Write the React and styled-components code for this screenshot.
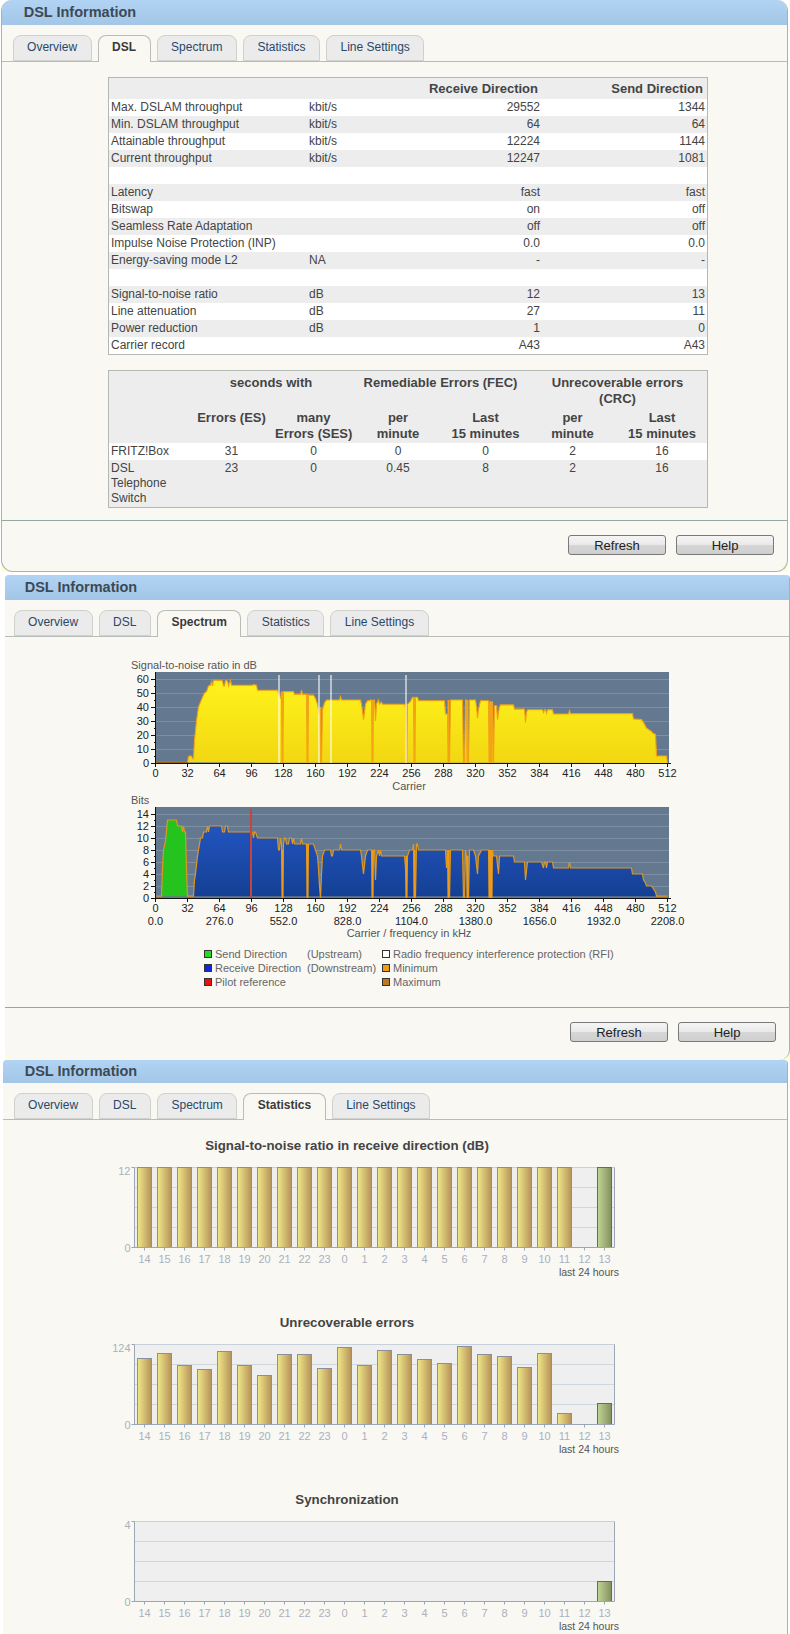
import styled, { createGlobalStyle } from "styled-components";

const TABS = ["Overview", "DSL", "Spectrum", "Statistics", "Line Settings"];
const HOURS = [14, 15, 16, 17, 18, 19, 20, 21, 22, 23, 0, 1, 2, 3, 4, 5, 6, 7, 8, 9, 10, 11, 12, 13];

const THROUGHPUT = [
  ["Max. DSLAM throughput", "kbit/s", "29552", "1344"],
  ["Min. DSLAM throughput", "kbit/s", "64", "64"],
  ["Attainable throughput", "kbit/s", "12224", "1144"],
  ["Current throughput", "kbit/s", "12247", "1081"],
  ["", "", "", ""],
  ["Latency", "", "fast", "fast"],
  ["Bitswap", "", "on", "off"],
  ["Seamless Rate Adaptation", "", "off", "off"],
  ["Impulse Noise Protection (INP)", "", "0.0", "0.0"],
  ["Energy-saving mode L2", "NA", "-", "-"],
  ["", "", "", ""],
  ["Signal-to-noise ratio", "dB", "12", "13"],
  ["Line attenuation", "dB", "27", "11"],
  ["Power reduction", "dB", "1", "0"],
  ["Carrier record", "", "A43", "A43"],
];

const SNR = [
  [0, 0.5], [31, 0.5], [32, 4.5], [33, 5], [35, 5], [36, 3], [37, 3], [38, 16], [40, 30], [42, 40], [44, 43.5],
  [46, 47], [48, 50], [50, 51], [52, 55], [54, 55.5], [55, 58], [56, 55], [57, 59], [65, 59], [66, 58.5], [67, 55],
  [68, 55], [69, 59], [71, 58.5], [72, 55], [74, 59], [75, 55.5], [96, 55.5], [97, 56], [100, 55.5], [101, 52],
  [121, 52], [122, 50], [124, 46], [125, 51], [126, 0], [127, 51], [137, 51], [138, 49], [144, 49], [145, 52],
  [146, 49], [150, 49], [151, 0], [152, 48.5], [157, 48.5], [159, 46], [161, 42], [163, 34], [164, 0], [165, 0],
  [166, 38], [168, 43], [170, 45], [183, 45], [184, 47.5], [185, 45], [204, 45], [205, 42], [206, 37], [207, 31],
  [208, 36], [209, 42], [211, 44.5], [215, 45], [216, 0], [217, 45], [218, 45], [219, 30], [220, 42], [222, 45],
  [223, 42], [225, 43.5], [226, 42], [248, 42], [249, 40], [250, 0], [251, 42], [254, 44], [256, 47], [257, 47],
  [258, 0], [259, 47], [261, 47], [262, 44.5], [288, 44.5], [289, 35], [291, 35], [292, 0], [293, 0], [294, 45],
  [306, 45], [307, 0], [308, 0], [309, 45], [310, 45], [311, 0], [312, 0], [313, 45], [319, 45], [320, 40],
  [321, 32], [322, 38], [324, 44.5], [332, 44.5], [333, 0], [334, 44], [335, 0], [336, 44], [337, 0], [338, 41],
  [340, 41], [341, 31], [342, 36], [343, 40], [344, 41.5], [357, 41.5], [358, 38.5], [368, 38.5], [369, 29],
  [370, 36], [371, 38], [386, 38], [387, 36], [388, 38], [389, 38], [390, 35.5], [391, 38], [396, 38], [397, 35],
  [412, 35], [413, 37.5], [414, 35.3], [476, 35.3], [477, 31.5], [485, 31], [487, 29], [490, 25], [492, 24],
  [494, 23], [497, 21], [499, 20.5], [500, 5], [510, 5], [511, 0],
];

const BITS_UP = [
  [0, 0.3], [5, 0.3], [6, 5], [7, 8], [9, 9.5], [11, 13], [20, 13], [21, 12], [25, 12], [26, 11], [27, 12], [28, 11],
  [29, 11], [30, 5], [31, 0.3],
];

const BITS_DOWN = [
  [31, 0.3], [37, 0.3], [38, 3], [39, 4], [41, 7], [43, 9], [44, 10], [46, 10], [47, 11], [50, 11], [51, 12], [52, 11],
  [53, 12], [65, 12], [66, 11], [68, 11], [69, 12], [71, 12], [72, 11], [96, 11], [97, 10], [98, 11], [99, 11],
  [101, 10], [121, 10], [122, 8], [123, 8], [124, 10], [125, 9], [126, 0], [127, 9], [128, 10], [129, 10], [130, 9],
  [132, 9], [133, 10], [135, 10], [136, 9], [137, 10], [138, 9], [144, 9], [145, 10], [146, 9], [150, 9], [151, 0],
  [152, 9], [157, 9], [159, 8], [161, 7], [162, 5], [163, 2], [164, 0], [165, 4], [166, 7], [168, 8], [174, 8],
  [175, 7], [176, 7], [177, 8], [183, 8], [184, 9], [185, 8], [204, 8], [205, 7], [207, 4], [209, 7], [211, 8],
  [215, 8], [216, 0], [217, 8], [218, 8], [219, 3], [220, 7], [222, 8], [223, 7], [224, 8], [225, 7], [248, 7],
  [249, 5], [250, 0], [251, 7], [253, 8], [256, 8], [257, 9], [258, 0], [259, 0], [260, 9], [261, 9], [262, 8],
  [289, 8], [290, 5], [291, 8], [292, 0], [293, 0], [294, 8], [306, 8], [307, 0], [308, 0], [309, 8], [310, 7],
  [311, 0], [312, 0], [313, 8], [317, 8], [319, 7], [321, 4], [322, 7], [325, 8], [332, 8], [333, 0], [334, 8],
  [335, 0], [336, 8], [337, 7], [340, 7], [342, 4], [343, 7], [357, 7], [358, 6], [368, 6], [369, 3], [371, 6],
  [385, 6], [387, 5], [388, 6], [389, 6], [390, 5], [391, 6], [396, 6], [397, 5], [412, 5], [413, 6], [414, 5],
  [475, 5], [476, 4], [486, 4], [487, 3], [489, 2.5], [490, 2], [495, 2], [499, 1], [500, 0.3], [511, 0.3],
];

const RFI_BARS = [123, 163, 175, 250];

// carrier, width, height of the solid minimum bars that run down to the axis
const SNR_DIPS = [[126, 2, 51], [151, 2, 49], [164, 2, 40], [216, 2, 45], [250, 2, 42], [258, 2, 47], [292, 2, 45], [311, 2, 45], [333, 4, 44]];
const BITS_DIPS = [[126, 2, 8], [151, 2, 9], [216, 2, 8], [250, 2, 7], [258, 2, 8], [292, 2, 8], [311, 2, 7], [333, 4, 8]];

const CRC_BARS = [66, 71, 59, 55, 73, 59, 49, 70, 70, 56, 77, 59, 74, 70, 65, 61, 78, 70, 68, 57, 71, 11, 0, 21];
const SNR_BARS = HOURS.map((h) => (h === 12 ? 0 : 80));
const SYNC_BARS = HOURS.map((h) => (h === 13 ? 20 : 0));

const GlobalStyle = createGlobalStyle`
  html, body {
    margin: 0;
    padding: 0;
    background: #ffffff;
  }
  body {
    font-family: "Liberation Sans", Arial, sans-serif;
    font-size: 12px;
    color: #444444;
  }
`;

const Page = styled.div`
  height: 1634px;
  overflow: hidden;
`;

const PanelFrame = styled.section`
  background: linear-gradient(transparent calc(100% - 12px), #ffffcf calc(100% - 12px));
  margin: ${(p) => `0 ${p.$right}px ${p.$gap}px ${p.$left}px`};
`;

const PanelBody = styled.div`
  background: #f9f8f3;
  border-left: ${(p) => (p.$edge ? "1px solid #a6b5a2" : "none")};
  border-right: 1px solid #a6b5a2;
  border-bottom: ${(p) => (p.$closed ? "1px solid #a6b5a2" : "none")};
  border-radius: ${(p) => (p.$rounded ? "11px 11px 12px 12px" : "4px 4px 10px 10px")};
  overflow: hidden;
`;

const PanelHeader = styled.h1`
  margin: 0;
  height: ${(p) => p.$height}px;
  line-height: ${(p) => p.$height}px;
  padding-left: ${(p) => 24.7 - p.$inset}px;
  background: linear-gradient(#b1d4f5, #a3c6e7);
  color: #3d4a54;
  font-size: 14.5px;
  font-weight: bold;
`;

const TabStrip = styled.nav`
  display: flex;
  gap: 6px;
  height: 27px;
  box-sizing: border-box;
  margin-top: 10px;
  padding-left: ${(p) => 13.6 - p.$inset}px;
  border-bottom: 1px solid #b8bdb8;
`;

const Tab = styled.span`
  height: ${(p) => (p.$active ? 27 : 26)}px;
  box-sizing: border-box;
  padding: 0 13.5px;
  line-height: 22px;
  background: ${(p) => (p.$active ? "#f9f8f3" : "#ebebeb")};
  border: 1px solid ${(p) => (p.$active ? "#b8bdb8" : "#d0d1cc")};
  border-bottom: ${(p) => (p.$active ? "none" : "1px solid #d0d1cc")};
  border-radius: 8px 8px 0 0;
  color: ${(p) => (p.$active ? "#3a3a3a" : "#28486a")};
  font-weight: ${(p) => (p.$active ? "bold" : "normal")};
`;

const TableArea = styled.div`
  padding: 15px 0 12px 106px;
  display: flex;
  flex-direction: column;
  gap: 15px;
`;

const DataTable = styled.table`
  width: 600px;
  box-sizing: border-box;
  table-layout: fixed;
  border-collapse: separate;
  border-spacing: 0;
  border: 1px solid #b4b8b2;
  background: #ededed;
  line-height: 15px;
`;

const Row = styled.tr`
  background: ${(p) => (p.$shade ? "#ededed" : "#ffffff")};
`;

const HeadCell = styled.th`
  padding: ${(p) => p.$pad || "3px 4px 2px 2px"};
  font-size: 13px;
  line-height: 16px;
  font-weight: bold;
  white-space: nowrap;
  color: #444444;
  text-align: ${(p) => p.$align || "center"};
  vertical-align: top;
`;

const Cell = styled.td`
  height: 17px;
  box-sizing: border-box;
  padding: 1px 2px;
  text-align: ${(p) => p.$align || "left"};
  vertical-align: top;
`;

const PanelFooter = styled.footer`
  display: flex;
  justify-content: flex-end;
  gap: 10px;
  padding: 14px 13px ${(p) => p.$bottom}px 0;
  border-top: 1px solid #94aaa4;
`;

const ActionButton = styled.button`
  width: 98px;
  height: 20px;
  padding: 0;
  border: 1px solid #777a78;
  border-radius: 3px;
  background: linear-gradient(#f5f5f5, #e9e9e9 50%, #d6d6d6 50%, #cfcfcf);
  color: #222222;
  font-family: inherit;
  font-size: 13px;
  line-height: 17px;
`;

const SpectrumSvg = styled.svg`
  display: block;
  width: 785px;
  height: 303px;
`;

const AxisText = styled.text`
  font-size: 11px;
  fill: #222222;
`;

const CaptionText = styled.text`
  font-size: 11px;
  fill: #555555;
`;

const Legend = styled.ul`
  list-style: none;
  margin: 7px 0 18px 199px;
  padding: 0;
  display: grid;
  grid-template-columns: 103px 75px auto;
  grid-auto-rows: 14px;
  font-size: 11px;
  line-height: 14px;
  color: #666666;
`;

const LegendItem = styled.li`
  display: flex;
  align-items: center;
  gap: 3px;
  white-space: nowrap;
  grid-column: ${(p) => p.$column};
  grid-row: ${(p) => p.$row};
`;

const Swatch = styled.i`
  width: 6px;
  height: 6px;
  border: 1px solid #333333;
  background: ${(p) => p.$color};
`;

const BarBlock = styled.div`
  width: 100%;
`;

const BarTitle = styled.h2`
  width: 688px;
  margin: 0;
  font-size: 13.3px;
  line-height: 16px;
  font-weight: bold;
  text-align: center;
  color: #444444;
`;

const BarSvg = styled.svg`
  display: block;
  width: 785px;
  height: 161px;
`;

const BarLabel = styled.text`
  font-size: 11px;
  fill: #aab0bf;
`;

const SmallText = styled.text`
  font-size: 10.5px;
  fill: #555555;
`;

const BarList = styled.div`
  padding-top: 17.5px;
`;

function toPoints(data, scale, base, left) {
  return data.map(([c, v]) => `${left + c + 0.5},${base - v * scale}`).join(" ");
}

function SpectrumAxes({ top, base, scale, step, max, left }) {
  const marks = [];
  for (let v = 0; v <= max; v += step / 2) marks.push(v);
  const carriers = [];
  for (let c = 0; c <= 512; c += 32) carriers.push(c);

  return (
    <g>
      <rect x={left} y={top} width={513} height={base - top} fill="#64798f" />
      {marks
        .filter((v) => v % step === 0 && v > 0)
        .map((v) => (
          <line key={v} x1={left} x2={left + 513} y1={base - v * scale + 0.5} y2={base - v * scale + 0.5} stroke="#7d8fa3" />
        ))}
      {marks.map((v) => (
        <line
          key={v}
          x1={left - (v % step === 0 ? 5 : 2)}
          x2={left}
          y1={base - v * scale + 0.5}
          y2={base - v * scale + 0.5}
          stroke="#111111"
        />
      ))}
      {marks
        .filter((v) => v % step === 0)
        .map((v) => (
          <AxisText key={v} x={left - 7} y={base - v * scale + 4} textAnchor="end">
            {v}
          </AxisText>
        ))}
      {carriers.map((c) => (
        <g key={c}>
          <line x1={left + c - 0.5} x2={left + c - 0.5} y1={base} y2={base + 4} stroke="#111111" />
          <AxisText x={left + c - 0.5} y={base + 14} textAnchor="middle">
            {c}
          </AxisText>
        </g>
      ))}
    </g>
  );
}

function AxisFrame({ top, base, left }) {
  return (
    <g stroke="#111111">
      <line x1={left - 0.5} x2={left - 0.5} y1={top} y2={base + 1} />
      <line x1={left - 1} x2={left + 515} y1={base + 0.5} y2={base + 0.5} />
    </g>
  );
}

function DipBars({ dips, scale, base, left, color }) {
  return dips.map(([c, w, h]) => (
    <rect key={c} x={left + c - 0.5} y={base - h * scale} width={w} height={h * scale} fill={color} />
  ));
}

function SpectrumCharts() {
  const left = 151;
  const snrBase = 126;
  const bitsBase = 261;
  const freqs = ["0.0", "276.0", "552.0", "828.0", "1104.0", "1380.0", "1656.0", "1932.0", "2208.0"];

  return (
    <SpectrumSvg viewBox="0 0 785 303">
      <defs>
        <linearGradient id="snrFill" gradientUnits="userSpaceOnUse" x1="0" x2="0" y1="40" y2={snrBase}>
          <stop offset="0" stopColor="#fff41b" />
          <stop offset="1" stopColor="#f2d712" />
        </linearGradient>
        <linearGradient id="bitsFill" gradientUnits="userSpaceOnUse" x1="0" x2="0" y1="190" y2={bitsBase}>
          <stop offset="0" stopColor="#2254bf" />
          <stop offset="1" stopColor="#143f92" />
        </linearGradient>
      </defs>

      <CaptionText x="126" y="32">Signal-to-noise ratio in dB</CaptionText>
      <SpectrumAxes top={35} base={snrBase} scale={1.4} step={10} max={60} left={left} />
      <polygon points={toPoints(SNR, 1.4, snrBase, left)} fill="url(#snrFill)" />
      <polyline points={toPoints(SNR, 1.4, snrBase, left)} fill="none" stroke="#f2a116" strokeWidth="1.1" />
      <DipBars dips={SNR_DIPS} scale={1.4} base={snrBase} left={left} color="#f5a316" />
      <polyline points={toPoints(SNR.slice(0, 2), 1.4, snrBase, left)} fill="none" stroke="#96620f" strokeWidth="1.2" />
      {RFI_BARS.map((c) => (
        <rect key={c} x={left + c - 1} y={38} width={2} height={snrBase - 38} fill="#ffffff" opacity="0.55" />
      ))}
      <AxisFrame top={35} base={snrBase} left={left} />
      <CaptionText x={404} y="153" textAnchor="middle">Carrier</CaptionText>

      <CaptionText x="126" y="167">Bits</CaptionText>
      <SpectrumAxes top={170} base={bitsBase} scale={6} step={2} max={14} left={left} />
      <polygon points={toPoints(BITS_UP, 6, bitsBase, left)} fill="#25c31e" />
      <polygon points={toPoints(BITS_DOWN, 6, bitsBase, left)} fill="url(#bitsFill)" />
      <polyline points={toPoints([...BITS_UP, ...BITS_DOWN], 6, bitsBase, left)} fill="none" stroke="#de971f" strokeWidth="1.2" />
      <DipBars dips={BITS_DIPS} scale={6} base={bitsBase} left={left} color="#f09a18" />
      <rect x={left + 94} y={172} width={2} height={bitsBase - 172} fill="#c8433b" />
      <AxisFrame top={170} base={bitsBase} left={left} />
      {freqs.map((f, i) => (
        <AxisText key={f} x={left + i * 64 - 0.5} y={bitsBase + 27} textAnchor="middle">
          {f}
        </AxisText>
      ))}
      <CaptionText x={404} y="300" textAnchor="middle">Carrier / frequency in kHz</CaptionText>
    </SpectrumSvg>
  );
}

function BarChart({ id, title, max, bars }) {
  const left = 131.5;
  const top = 13.5;
  const base = 93.5;

  return (
    <BarBlock>
      <BarTitle>{title}</BarTitle>
      <BarSvg viewBox="0 0 785 161">
        <defs>
          <linearGradient id={`${id}-bar`}>
            <stop offset="0" stopColor="#f0e888" />
            <stop offset="1" stopColor="#b5925a" />
          </linearGradient>
          <linearGradient id={`${id}-now`}>
            <stop offset="0" stopColor="#c2d596" />
            <stop offset="1" stopColor="#83905f" />
          </linearGradient>
        </defs>
        <rect x={left} y={top} width={480} height={80} fill="#efefef" />
        {[1, 2, 3].map((i) => (
          <line key={i} x1={left} x2={left + 480} y1={top + i * 20} y2={top + i * 20} stroke="#cfd6de" />
        ))}
        <line x1={left} x2={left + 480} y1={top} y2={top} stroke="#c6d1dd" />
        {bars.map((h, i) =>
          h > 0 ? (
            <rect
              key={i}
              x={left + 3 + i * 20}
              y={base - h}
              width={14}
              height={h}
              fill={`url(#${id}-${i === 23 ? "now" : "bar"})`}
              stroke={i === 23 ? "#5f6f5a" : "#8b8f99"}
            />
          ) : null
        )}
        <g stroke="#9aa6b4">
          <line x1={left} x2={left} y1={top} y2={base} />
          <line x1={left + 480} x2={left + 480} y1={top} y2={base} />
          <line x1={left - 3} x2={left + 480} y1={base} y2={base} />
          <line x1={left - 3} x2={left} y1={top} y2={top} />
          {HOURS.map((_, i) => (
            <line key={i} x1={left + 10 + i * 20} x2={left + 10 + i * 20} y1={base} y2={base + 3} />
          ))}
        </g>
        <BarLabel x={left - 4} y={top + 7} textAnchor="end">{max}</BarLabel>
        <BarLabel x={left - 4} y={base + 4} textAnchor="end">0</BarLabel>
        {HOURS.map((h, i) => (
          <BarLabel key={h} x={left + 10 + i * 20} y={109} textAnchor="middle">
            {h}
          </BarLabel>
        ))}
        <SmallText x="616" y="122" textAnchor="end">last 24 hours</SmallText>
      </BarSvg>
    </BarBlock>
  );
}

function Panel({ left, inset, right, gap, rounded, edge, closed, headerHeight, active, children }) {
  return (
    <PanelFrame $left={left} $right={right} $gap={gap}>
      <PanelBody $rounded={rounded} $edge={edge} $closed={closed}>
        <PanelHeader $height={headerHeight} $inset={inset}>DSL Information</PanelHeader>
        <TabStrip $inset={inset}>
          {TABS.map((t) => (
            <Tab key={t} $active={t === active}>{t}</Tab>
          ))}
        </TabStrip>
        {children}
      </PanelBody>
    </PanelFrame>
  );
}

function Footer({ bottom }) {
  return (
    <PanelFooter $bottom={bottom}>
      <ActionButton>Refresh</ActionButton>
      <ActionButton>Help</ActionButton>
    </PanelFooter>
  );
}

function ThroughputTable() {
  return (
    <DataTable>
      <colgroup>
        <col width="198" />
        <col width="60" />
        <col width="175" />
        <col width="165" />
      </colgroup>
      <thead>
        <Row $shade>
          <HeadCell colSpan="2" />
          <HeadCell $align="right">Receive Direction</HeadCell>
          <HeadCell $align="right">Send Direction</HeadCell>
        </Row>
      </thead>
      <tbody>
        {THROUGHPUT.map((r, i) => (
          <Row key={i} $shade={i % 2 === 1}>
            <Cell>{r[0]}</Cell>
            <Cell>{r[1]}</Cell>
            <Cell $align="right">{r[2]}</Cell>
            <Cell $align="right">{r[3]}</Cell>
          </Row>
        ))}
      </tbody>
    </DataTable>
  );
}

function ErrorsTable() {
  const top = "4px 2px 3px";
  const sub = "0 1px 1px";

  return (
    <DataTable>
      <colgroup>
        <col width="80" />
        <col width="85" />
        <col width="79" />
        <col width="90" />
        <col width="85" />
        <col width="89" />
        <col width="90" />
      </colgroup>
      <thead>
        <Row $shade>
          <HeadCell $pad={top} />
          <HeadCell $pad={top} colSpan="2">seconds with</HeadCell>
          <HeadCell $pad={top} colSpan="2">Remediable Errors (FEC)</HeadCell>
          <HeadCell $pad={top} colSpan="2">Unrecoverable errors<br />(CRC)</HeadCell>
        </Row>
        <Row $shade>
          <HeadCell $pad={sub} />
          <HeadCell $pad={sub}>Errors (ES)</HeadCell>
          <HeadCell $pad={sub}>many<br />Errors (SES)</HeadCell>
          <HeadCell $pad={sub}>per<br />minute</HeadCell>
          <HeadCell $pad={sub}>Last<br />15 minutes</HeadCell>
          <HeadCell $pad={sub}>per<br />minute</HeadCell>
          <HeadCell $pad={sub}>Last<br />15 minutes</HeadCell>
        </Row>
      </thead>
      <tbody>
        <Row>
          <Cell>FRITZ!Box</Cell>
          {["31", "0", "0", "0", "2", "16"].map((v, i) => (
            <Cell key={i} $align="center">{v}</Cell>
          ))}
        </Row>
        <Row $shade>
          <Cell>DSL Telephone Switch</Cell>
          {["23", "0", "0.45", "8", "2", "16"].map((v, i) => (
            <Cell key={i} $align="center">{v}</Cell>
          ))}
        </Row>
      </tbody>
    </DataTable>
  );
}

export default function App() {
  return (
    <Page>
      <GlobalStyle />

      <Panel left={1} inset={3} right={2} gap={3} rounded edge closed headerHeight={25} active="DSL">
        <TableArea>
          <ThroughputTable />
          <ErrorsTable />
        </TableArea>
        <Footer bottom={16} />
      </Panel>

      <Panel left={5} inset={5} right={0} gap={0} headerHeight={25} active="Spectrum">
        <SpectrumCharts />
        <Legend>
          <LegendItem $column={1} $row={1}><Swatch $color="#22dc22" />Send Direction</LegendItem>
          <LegendItem $column={2} $row={1}>(Upstream)</LegendItem>
          <LegendItem $column={3} $row={1}><Swatch $color="#ffffff" />Radio frequency interference protection (RFI)</LegendItem>
          <LegendItem $column={1} $row={2}><Swatch $color="#1028e0" />Receive Direction</LegendItem>
          <LegendItem $column={2} $row={2}>(Downstream)</LegendItem>
          <LegendItem $column={3} $row={2}><Swatch $color="#f29a14" />Minimum</LegendItem>
          <LegendItem $column={1} $row={3}><Swatch $color="#ee1010" />Pilot reference</LegendItem>
          <LegendItem $column={3} $row={3}><Swatch $color="#c07820" />Maximum</LegendItem>
        </Legend>
        <Footer bottom={18} />
      </Panel>

      <Panel left={3} inset={3} right={2} gap={0} headerHeight={23} active="Statistics">
        <BarList>
          <BarChart id="snr" title="Signal-to-noise ratio in receive direction (dB)" max={12} bars={SNR_BARS} />
          <BarChart id="crc" title="Unrecoverable errors" max={124} bars={CRC_BARS} />
          <BarChart id="sync" title="Synchronization" max={4} bars={SYNC_BARS} />
        </BarList>
      </Panel>
    </Page>
  );
}
